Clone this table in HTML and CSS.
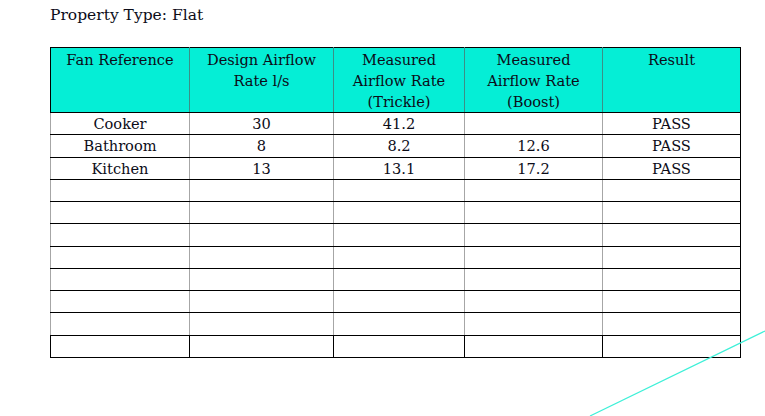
FILE: index.html
```html
<!DOCTYPE html>
<html>
<head>
<meta charset="utf-8">
<link rel="stylesheet" href="styles.css">
</head>
<body>
<div class="page">
  <p class="title">Property Type: Flat</p>
  <table class="grid">
    <colgroup>
      <col class="c1"><col class="c2"><col class="c3"><col class="c4"><col class="c5">
    </colgroup>
    <thead>
      <tr>
        <th>Fan Reference</th>
        <th>Design Airflow<br>Rate l/s</th>
        <th>Measured<br>Airflow Rate<br>(Trickle)</th>
        <th>Measured<br>Airflow Rate<br>(Boost)</th>
        <th>Result</th>
      </tr>
    </thead>
    <tbody>
      <tr><td>Cooker</td><td>30</td><td>41.2</td><td></td><td>PASS</td></tr>
      <tr><td>Bathroom</td><td>8</td><td>8.2</td><td>12.6</td><td>PASS</td></tr>
      <tr><td>Kitchen</td><td>13</td><td>13.1</td><td>17.2</td><td>PASS</td></tr>
      <tr><td></td><td></td><td></td><td></td><td></td></tr>
      <tr><td></td><td></td><td></td><td></td><td></td></tr>
      <tr><td></td><td></td><td></td><td></td><td></td></tr>
      <tr><td></td><td></td><td></td><td></td><td></td></tr>
      <tr><td></td><td></td><td></td><td></td><td></td></tr>
      <tr><td></td><td></td><td></td><td></td><td></td></tr>
      <tr><td></td><td></td><td></td><td></td><td></td></tr>
      <tr class="last"><td></td><td></td><td></td><td></td><td></td></tr>
    </tbody>
  </table>
</div>
<svg class="diag" width="765" height="416" viewBox="0 0 765 416">
  <line x1="765" y1="331" x2="590" y2="416" stroke="#3ef0d8" stroke-width="1.2"/>
</svg>
</body>
</html>
```
FILE: styles.css
```css
html, body {
  margin: 0;
  padding: 0;
  background: #ffffff;
  width: 765px;
  height: 416px;
  overflow: hidden;
}
.page {
  padding: 5px 0 0 50px;
  font-family: "DejaVu Serif", "Liberation Serif", serif;
  color: #0c0c18;
}
.title {
  margin: 0;
  font-size: 15.5px;
  line-height: 21px;
  height: 42px;
}
.grid {
  border-collapse: collapse;
  table-layout: fixed;
  width: 691px;
  font-size: 14.6px;
}
.c1 { width: 139px; }
.c2 { width: 144px; }
.c3 { width: 131px; }
.c4 { width: 138px; }
.c5 { width: 138px; }
.grid th {
  background: #05eed6;
  font-weight: normal;
  vertical-align: top;
  text-align: center;
  line-height: 21px;
  height: 63px;
  padding: 1px 0 0 0;
  border: 1px solid #000;
  border-left-color: #3c8f86;
  border-right-color: #3c8f86;
}
.grid th:first-child { border-left-color: #000; }
.grid th:last-child { border-right-color: #000; }
.grid td {
  text-align: center;
  line-height: 20px;
  height: 20.27px;
  padding: 1px 0 0 0;
  border-top: 1px solid #000;
  border-bottom: 1px solid #000;
  border-left: 1px solid #a6a6a6;
  border-right: 1px solid #a6a6a6;
}
.grid td:nth-child(2) { border-left-color: #a6a6a6; }
.grid td:nth-child(3) { border-left-color: #000; }
.grid td:nth-child(4) { border-left-color: #000; }
.grid td:nth-child(5) { border-left-color: #8c8c8c; }
.grid td:last-child { border-right-color: #000; }
.grid tr.last td { border-left-color: #000; border-right-color: #000; }
.diag {
  position: absolute;
  left: 0;
  top: 0;
  pointer-events: none;
}
```
